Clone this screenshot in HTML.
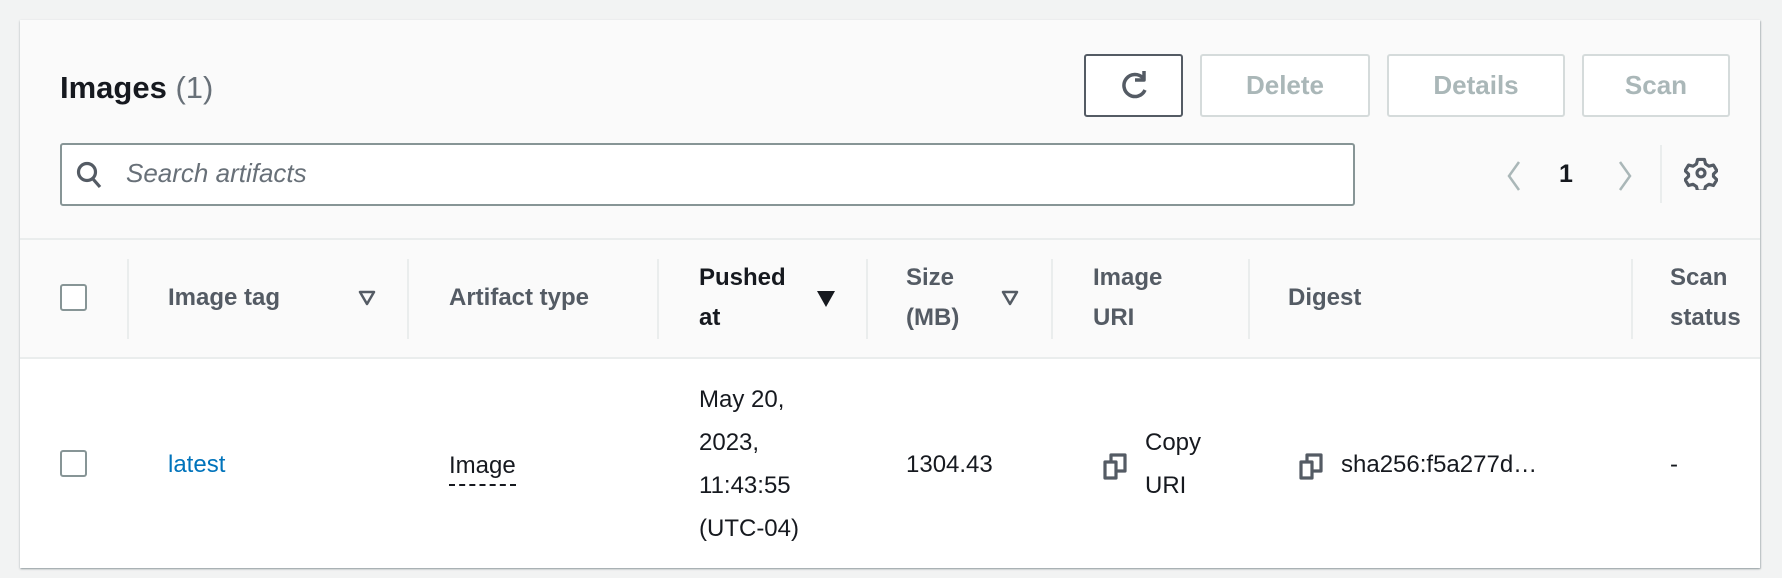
<!DOCTYPE html>
<html><head><meta charset="utf-8"><style>
*{box-sizing:border-box;margin:0;padding:0}
body{width:1782px;height:578px;background:#f2f3f3;font-family:"Liberation Sans",Arial,sans-serif;position:relative;overflow:hidden;color:#16191f}
.card{position:absolute;left:20px;top:20px;width:1740px;height:548px;background:#fff;box-shadow:0 1px 2px rgba(0,28,36,.3),1px 1px 1px rgba(0,28,36,.15)}
.hdr{position:absolute;left:0;top:0;width:1740px;height:338px;background:#fafafa}
.abs{position:absolute}
.btn{position:absolute;top:34px;height:63px;border:2px solid #d5dbdb;border-radius:3px;background:#fff;color:#aab7b8;font-weight:bold;font-size:26px;display:flex;align-items:center;justify-content:center}
.th{position:absolute;font-weight:bold;font-size:24px;color:#545b64;line-height:40px}
.td{position:absolute;font-size:24px;line-height:43px;color:#16191f}
.div{position:absolute;top:239px;width:2px;height:80px;background:#eaeded}
.cb{position:absolute;width:27px;height:27px;border:2px solid #879596;border-radius:3px;background:#fff}
</style></head><body>
<div class="card">
<div class="hdr"></div>
<div class="abs" style="left:40px;top:50px;font-size:31px;font-weight:bold;color:#16191f">Images <span style="font-weight:normal;color:#687078">(1)</span></div>
<div class="btn" style="left:1064px;width:99px;border-color:#545b64">
<svg width="34" height="36" viewBox="0 0 34 36" fill="none" stroke="#545b64" stroke-width="3.5"><path d="M26 10A11 11 0 1 0 28 22"/><path d="M27 3v9h-9" stroke-linejoin="round"/></svg></div>
<div class="btn" style="left:1180px;width:170px">Delete</div>
<div class="btn" style="left:1367px;width:178px">Details</div>
<div class="btn" style="left:1562px;width:148px">Scan</div>
<div class="abs" style="left:40px;top:123px;width:1295px;height:63px;border:2px solid #879596;border-radius:3px;background:#fff"></div>
<svg class="abs" style="left:56px;top:140px" width="28" height="30" viewBox="0 0 28 30" fill="none" stroke="#545b64" stroke-width="3.2"><circle cx="11" cy="12" r="8.5"/><path d="M17 19l7 8"/></svg>
<div class="abs" style="left:106px;top:138px;font-size:26px;font-style:italic;color:#687078">Search artifacts</div>
<svg class="abs" style="left:1484px;top:140px" width="20" height="32" viewBox="0 0 20 32" fill="none" stroke="#aab7b8" stroke-width="2.5"><path d="M15 2L5 16l10 14"/></svg>
<div class="abs" style="left:1539px;top:140px;font-size:25px;font-weight:bold">1</div>
<svg class="abs" style="left:1595px;top:140px" width="20" height="32" viewBox="0 0 20 32" fill="none" stroke="#aab7b8" stroke-width="2.5"><path d="M5 2l10 14L5 30"/></svg>
<div class="abs" style="left:1640px;top:125px;width:2px;height:58px;background:#eaeded"></div>
<svg class="abs" style="left:1664px;top:136px" width="34" height="34" viewBox="0 0 30 30" fill="none" stroke="#545b64" stroke-width="2.8" stroke-linejoin="round"><path d="M12 3h6l1 4 3 2 4-1 3 5-3 3v2l3 3-3 5-4-1-3 2-1 4h-6l-1-4-3-2-4 1-3-5 3-3v-2l-3-3 3-5 4 1 3-2z"/><circle cx="15" cy="15" r="3.5"/></svg>
<div class="abs" style="left:0;top:218px;width:1740px;height:2px;background:#eaeded"></div>
<div class="abs" style="left:0;top:337px;width:1740px;height:2px;background:#eaeded"></div>
<div class="cb" style="left:40px;top:264px"></div>
<div class="div" style="left:107px"></div><div class="div" style="left:387px"></div><div class="div" style="left:637px"></div><div class="div" style="left:846px"></div><div class="div" style="left:1031px"></div><div class="div" style="left:1228px"></div><div class="div" style="left:1611px"></div>
<div class="th" style="left:148px;top:258px">Image tag</div>
<svg class="abs" style="left:338px;top:270px" width="18" height="16" viewBox="0 0 18 16" fill="none" stroke="#545b64" stroke-width="2.5" stroke-linejoin="round"><path d="M2 2h14L9 14z"/></svg>
<div class="th" style="left:429px;top:258px">Artifact type</div>
<div class="th" style="left:679px;top:238px;color:#16191f">Pushed<br>at</div>
<svg class="abs" style="left:796px;top:270px" width="20" height="18" viewBox="0 0 20 18"><path d="M1 1h18L10 17z" fill="#16191f"/></svg>
<div class="th" style="left:886px;top:238px">Size<br>(MB)</div>
<svg class="abs" style="left:981px;top:270px" width="18" height="16" viewBox="0 0 18 16" fill="none" stroke="#545b64" stroke-width="2.5" stroke-linejoin="round"><path d="M2 2h14L9 14z"/></svg>
<div class="th" style="left:1073px;top:238px">Image<br>URI</div>
<div class="th" style="left:1268px;top:258px">Digest</div>
<div class="th" style="left:1650px;top:238px">Scan<br>status</div>
<div class="cb" style="left:40px;top:430px"></div>
<div class="td" style="left:148px;top:423px;color:#0073bb">latest</div>
<div class="td" style="left:429px;top:428px;border-bottom:2px dashed #16191f;line-height:36px">Image</div>
<div class="td" style="left:679px;top:358px">May 20,<br>2023,<br>11:43:55<br>(UTC-04)</div>
<div class="td" style="left:886px;top:423px">1304.43</div>
<svg class="abs" style="left:1082px;top:431px" width="30" height="30" viewBox="0 0 30 30" fill="none" stroke="#545b64" stroke-width="3.2" stroke-linejoin="round"><rect x="3" y="11" width="11" height="16"/><path d="M9 11V4h14v16h-9"/></svg>
<div class="td" style="left:1125px;top:401px">Copy<br>URI</div>
<svg class="abs" style="left:1278px;top:431px" width="30" height="30" viewBox="0 0 30 30" fill="none" stroke="#545b64" stroke-width="3.2" stroke-linejoin="round"><rect x="3" y="11" width="11" height="16"/><path d="M9 11V4h14v16h-9"/></svg>
<div class="td" style="left:1321px;top:423px">sha256:f5a277d…</div>
<div class="td" style="left:1650px;top:423px">-</div>
</div>
</body></html>
